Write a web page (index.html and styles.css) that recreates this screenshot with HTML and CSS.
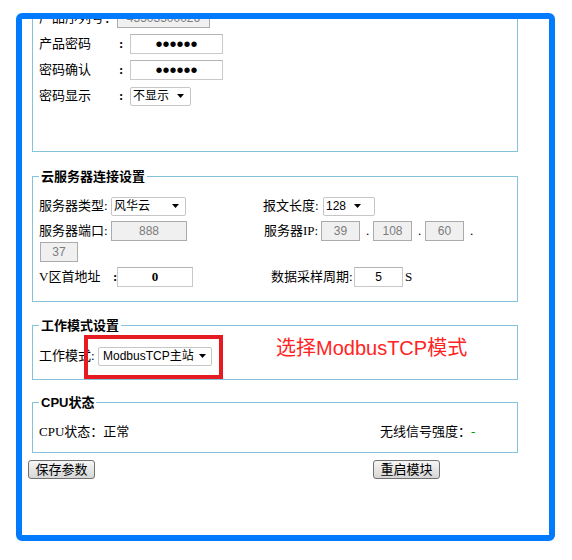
FILE: index.html
```html
<!DOCTYPE html>
<html lang="zh-CN">
<head>
<meta charset="utf-8">
<title>参数设置</title>
<link rel="stylesheet" href="styles.css">
</head>
<body>
<div class="frame">
  <div class="page">
    <fieldset class="group group-basic">
      <div class="row">
        <span class="lbl-serial">产品序列号：</span>
        <input class="field field-off field-serial" value="43503500026" disabled>
      </div>
      <div class="row">
        <span class="lbl">产品密码</span><span class="colon">:</span>
        <input class="field field-pw" type="password" value="123456">
      </div>
      <div class="row">
        <span class="lbl">密码确认</span><span class="colon">:</span>
        <input class="field field-pw" type="password" value="123456">
      </div>
      <div class="row">
        <span class="lbl">密码显示</span><span class="colon">:</span>
        <span class="select select-show"><select class="select-native"><option>不显示</option></select><svg class="select-arrow" width="7" height="4" viewBox="0 0 7 4"><path d="M0 0h7L3.5 4z"/></svg></span>
      </div>
    </fieldset>

    <fieldset class="group group-cloud">
      <legend>云服务器连接设置</legend>
      <div class="crow">
        <div class="cell-left">
          <span class="lbl-server">服务器类型:</span>
          <span class="select select-server"><select class="select-native"><option>风华云</option></select><svg class="select-arrow" width="7" height="4" viewBox="0 0 7 4"><path d="M0 0h7L3.5 4z"/></svg></span>
        </div>
        <div class="cell-right">
          <span class="lbl-len">报文长度:</span>
          <span class="select select-len"><select class="select-native"><option>128</option></select><svg class="select-arrow" width="7" height="4" viewBox="0 0 7 4"><path d="M0 0h7L3.5 4z"/></svg></span>
        </div>
      </div>
      <div class="crow crow-gap">
        <div class="cell-left">
          <span class="lbl-server">服务器端口:</span>
          <input class="field field-off field-port" value="888" disabled>
        </div>
        <div class="cell-right">
          <span class="lbl-ip">服务器IP:</span>
          <input class="field field-off field-ip" value="39" disabled><span class="dot">.</span><input class="field field-off field-ip" value="108" disabled><span class="dot">.</span><input class="field field-off field-ip" value="60" disabled><span class="dot">.</span>
        </div>
      </div>
      <div class="crow crow-wrap">
        <input class="field field-off field-ip4" value="37" disabled>
      </div>
      <div class="crow crow-gap">
        <div class="cell-left">
          <span class="lbl-v">V区首地址</span><span class="colon-v">:</span>
          <input class="field field-v" value="0">
        </div>
        <div class="cell-right">
          <span class="lbl-period">数据采样周期:</span>
          <input class="field field-period" value="5"><span class="unit">S</span>
        </div>
      </div>
    </fieldset>

    <fieldset class="group group-mode">
      <legend>工作模式设置</legend>
      <div class="crow">
        <span class="lbl-mode">工作模式:</span>
        <span class="select select-mode"><select class="select-native"><option>ModbusTCP主站</option></select><svg class="select-arrow" width="7" height="4" viewBox="0 0 7 4"><path d="M0 0h7L3.5 4z"/></svg><span class="highlight"></span></span>
        <span class="note">选择ModbusTCP模式</span>
      </div>
    </fieldset>

    <fieldset class="group group-cpu">
      <legend>CPU状态</legend>
      <div class="crow">
        <span class="cpu-left">CPU状态：正常</span>
        <span>无线信号强度：<span class="signal">-</span></span>
      </div>
    </fieldset>

    <div class="actions">
      <button class="btn btn-save">保存参数</button>
      <button class="btn btn-restart">重启模块</button>
    </div>
  </div>
</div>
</body>
</html>
```

FILE: styles.css
```css
* { box-sizing: border-box; }

body {
  margin: 0;
  background: #fff;
  color: #000;
  font: 13px/16px "Liberation Serif", "Noto Sans CJK SC", serif;
}

.frame {
  margin: 13px 0 0 16px;
  width: 539px;
  height: 528px;
  border: 6px solid #007aff;
  border-radius: 6px;
  overflow: hidden;
}

.page {
  margin-top: -14px;
  padding-left: 6px;
}

.group {
  margin: 0 0 0 4px;
  width: 486px;
  min-inline-size: 0;
  border: 1px solid #84c4da;
  padding: 0 6px;
}

.group legend {
  padding: 0 2px;
  font: bold 13px/17px "Liberation Sans", "Noto Sans CJK SC", sans-serif;
}

.group-basic { border-top: none; padding-bottom: 42px; }
.group-cloud { margin-top: 16px; padding-top: 11px; padding-bottom: 14px; }
.group-mode  { margin-top: 15px; padding-top: 12px; padding-bottom: 13px; }
.group-cpu   { margin-top: 14px; padding-top: 11px; padding-bottom: 10px; }

.row {
  display: flex;
  align-items: center;
  height: 26px;
}

.lbl-serial { width: 78px; }
.lbl { width: 78px; }
.colon { width: 13px; padding-left: 2px; font-weight: bold; }

.field {
  height: 20px;
  margin: 0;
  padding: 0;
  border: 1px solid #c9c9c9;
  border-top-color: #b4b4b4;
  border-radius: 0;
  background: #fff;
  color: #000;
  text-align: center;
  font: 12px/18px "Liberation Sans", "Noto Sans CJK SC", sans-serif;
  outline: none;
}

.field-off {
  background: #f0f0f0;
  border-color: #ababab;
  color: #7c7c7c;
}

.field-serial { width: 93px; }
.field-pw { width: 93px; font-size: 20px; }
.field-port { width: 76px; }
.field-ip { width: 39px; }
.field-ip4 { width: 38px; margin-left: 1px; }
.field-v { width: 76px; font-family: "Liberation Serif", serif; font-weight: bold; font-size: 13px; }
.field-period { width: 49px; }

.select {
  display: inline-flex;
  align-items: center;
  height: 19px;
  border: 1px solid #c6c6c6;
  border-radius: 2px;
  background: #fff;
  position: relative;
}

.select-native {
  appearance: none;
  -webkit-appearance: none;
  flex: 1;
  min-width: 0;
  height: 17px;
  margin: 0;
  padding: 0 0 0 2px;
  border: 0;
  background: transparent;
  color: #000;
  font: 12px/17px "Liberation Sans", "Noto Sans CJK SC", sans-serif;
  outline: none;
}

.select-arrow {
  flex: none;
  margin: 0 6px 0 3px;
  fill: #000;
}

.select-show { width: 61px; }
.select-server { width: 75px; }
.select-len { width: 52px; }
.select-len .select-arrow { margin-right: 13px; }
.select-mode { width: 114px; }
.select-mode .select-native { padding-left: 4px; }
.select-mode .select-arrow { margin-right: 5px; }

.crow {
  display: flex;
  align-items: center;
  height: 20px;
}

.crow-gap { margin-top: 5px; }
.crow-wrap { margin-top: 1px; }

.cell-left {
  display: flex;
  align-items: center;
  width: 224px;
  flex: none;
}

.cell-right {
  display: flex;
  align-items: center;
}

.lbl-server { width: 72px; }
.lbl-len { width: 60px; }
.lbl-ip { width: 57px; margin-left: 1px; }
.dot { width: 13px; text-align: center; padding-left: 2px; }
.lbl-v { width: 74px; }
.colon-v { width: 4px; font-weight: bold; }
.lbl-period { width: 83px; margin-left: 8px; }
.unit { margin-left: 2px; }

.lbl-mode { width: 59px; }

.highlight {
  position: absolute;
  left: -15px;
  top: -13px;
  width: 139px;
  height: 44px;
  border: 4px solid #e61a23;
  pointer-events: none;
}

.note {
  margin-left: 64px;
  margin-bottom: 16px;
  color: #ff2424;
  font: 20px/22px "Liberation Sans", "Noto Sans CJK SC", sans-serif;
  white-space: nowrap;
}

.cpu-left { width: 341px; }
.signal { color: #009a00; }

.actions {
  display: flex;
  margin-top: 7px;
}

.btn {
  height: 19px;
  width: 67px;
  padding: 0;
  border: 1px solid #707070;
  border-radius: 3px;
  background: linear-gradient(#f6f6f6, #e6e6e6 50%, #d6d6d6);
  color: #000;
  font: 13px/17px "Liberation Sans", "Noto Sans CJK SC", sans-serif;
}

.btn-restart { margin-left: 278px; }
```
